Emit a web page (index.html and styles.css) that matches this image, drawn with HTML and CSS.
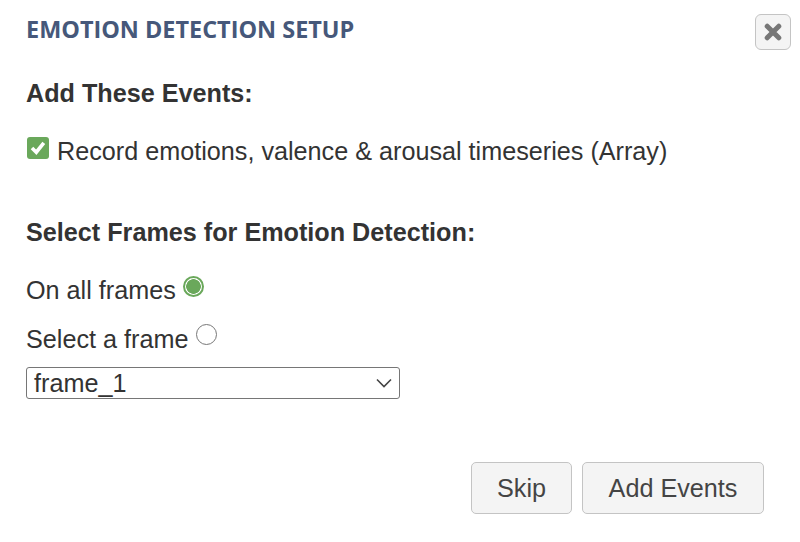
FILE: index.html
```html
<!DOCTYPE html>
<html lang="en">
<head>
<meta charset="utf-8">
<title>Emotion Detection Setup</title>
<link rel="stylesheet" href="styles.css">
</head>
<body>
<div class="dialog">
  <header class="head">
    <h1 class="title">EMOTION DETECTION SETUP</h1>
    <button class="close" type="button" aria-label="Close">
      <svg class="close-icon" width="18" height="18" viewBox="0 0 18 18"><path d="M3.2 3.2 14.8 14.8M14.8 3.2 3.2 14.8" stroke="#777" stroke-width="5" stroke-linecap="round"/></svg>
    </button>
  </header>
  <h2 class="label first">Add These Events:</h2>
  <div class="check-row">
    <span class="check"><svg width="22" height="22" viewBox="0 0 22 22"><path d="M5 11 9.3 15.2 16.8 5.8" fill="none" stroke="#fff" stroke-width="3.6"/></svg></span>
    <span>Record emotions, valence &amp; arousal timeseries (Array)</span>
  </div>
  <h2 class="label second">Select Frames for Emotion Detection:</h2>
  <div class="radio-row one"><span>On all frames</span><span class="radio on"></span></div>
  <div class="radio-row two"><span>Select a frame</span><span class="radio off"></span></div>
  <div class="select">
    <span>frame_1</span>
    <svg width="18" height="10" viewBox="0 0 18 10"><path d="M2 1.5 9 8.5 16 1.5" fill="none" stroke="#444" stroke-width="1.6"/></svg>
  </div>
  <footer class="actions">
    <button class="btn skip" type="button">Skip</button>
    <button class="btn add" type="button">Add Events</button>
  </footer>
</div>
</body>
</html>
```

FILE: styles.css
```css
* { box-sizing: border-box; }
html, body { margin: 0; height: 100%; background: #fff; }
body {
  font-family: "Liberation Sans", Arial, sans-serif;
  font-size: 25.2px;
  color: #333;
  overflow: hidden;
}
.dialog { width: 800px; height: 542px; padding: 0 36px 0 26px; display: flex; flex-direction: column; }
.head { display: flex; justify-content: space-between; align-items: flex-start; height: 50px; }
.title {
  margin: 13px 0 0;
  font-family: "Open Sans", sans-serif;
  font-size: 23.45px;
  line-height: 32px;
  font-weight: 700;
  color: #46587a;
}
.close {
  margin: 14px -27px 0 0;
  width: 36px;
  height: 36px;
  padding: 0;
  display: flex;
  align-items: center;
  justify-content: center;
  background: #f4f4f4;
  border: 1px solid #c4c4c4;
  border-radius: 6px;
}
.label { margin: 0; font-size: 25.2px; line-height: 28px; font-weight: 700; color: #333; }
.first { margin-top: 29px; }
.check-row { display: flex; align-items: flex-start; gap: 8px; margin-top: 29px; line-height: 30px; height: 30px; }
.check { width: 22px; height: 22px; margin: 1px 0 0 1px; border-radius: 3px; background: #6aa85b; display: block; }
.check svg { display: block; }
.second { margin-top: 52px; }
.radio-row { display: flex; align-items: flex-start; line-height: 28px; height: 28px; }
.one { margin-top: 30px; gap: 7px; }
.two { margin-top: 21px; gap: 8px; }
.radio { width: 21px; height: 21px; border-radius: 50%; border: 1.5px solid #777; background: #fff; display: block; }
.radio.on { margin-top: 0; border: 2px solid #6aa85b; background: radial-gradient(circle, #6aa85b 0 7px, #fff 7.6px); }
.radio.off { margin-top: -1px; }
.select {
  width: 374px;
  height: 32px;
  margin-top: 14px;
  padding: 0 6px 0 7px;
  display: flex;
  align-items: center;
  justify-content: space-between;
  border: 1px solid #767676;
  border-radius: 3px;
  background: #fff;
  line-height: 30px;
}
.actions { display: flex; justify-content: flex-end; gap: 10px; margin-top: 63px; }
.btn {
  height: 52px;
  padding: 0;
  font: inherit;
  color: #444;
  background: #f4f4f4;
  border: 1px solid #c4c4c4;
  border-radius: 5px;
}
.skip { width: 101px; }
.add { width: 182px; }
```
